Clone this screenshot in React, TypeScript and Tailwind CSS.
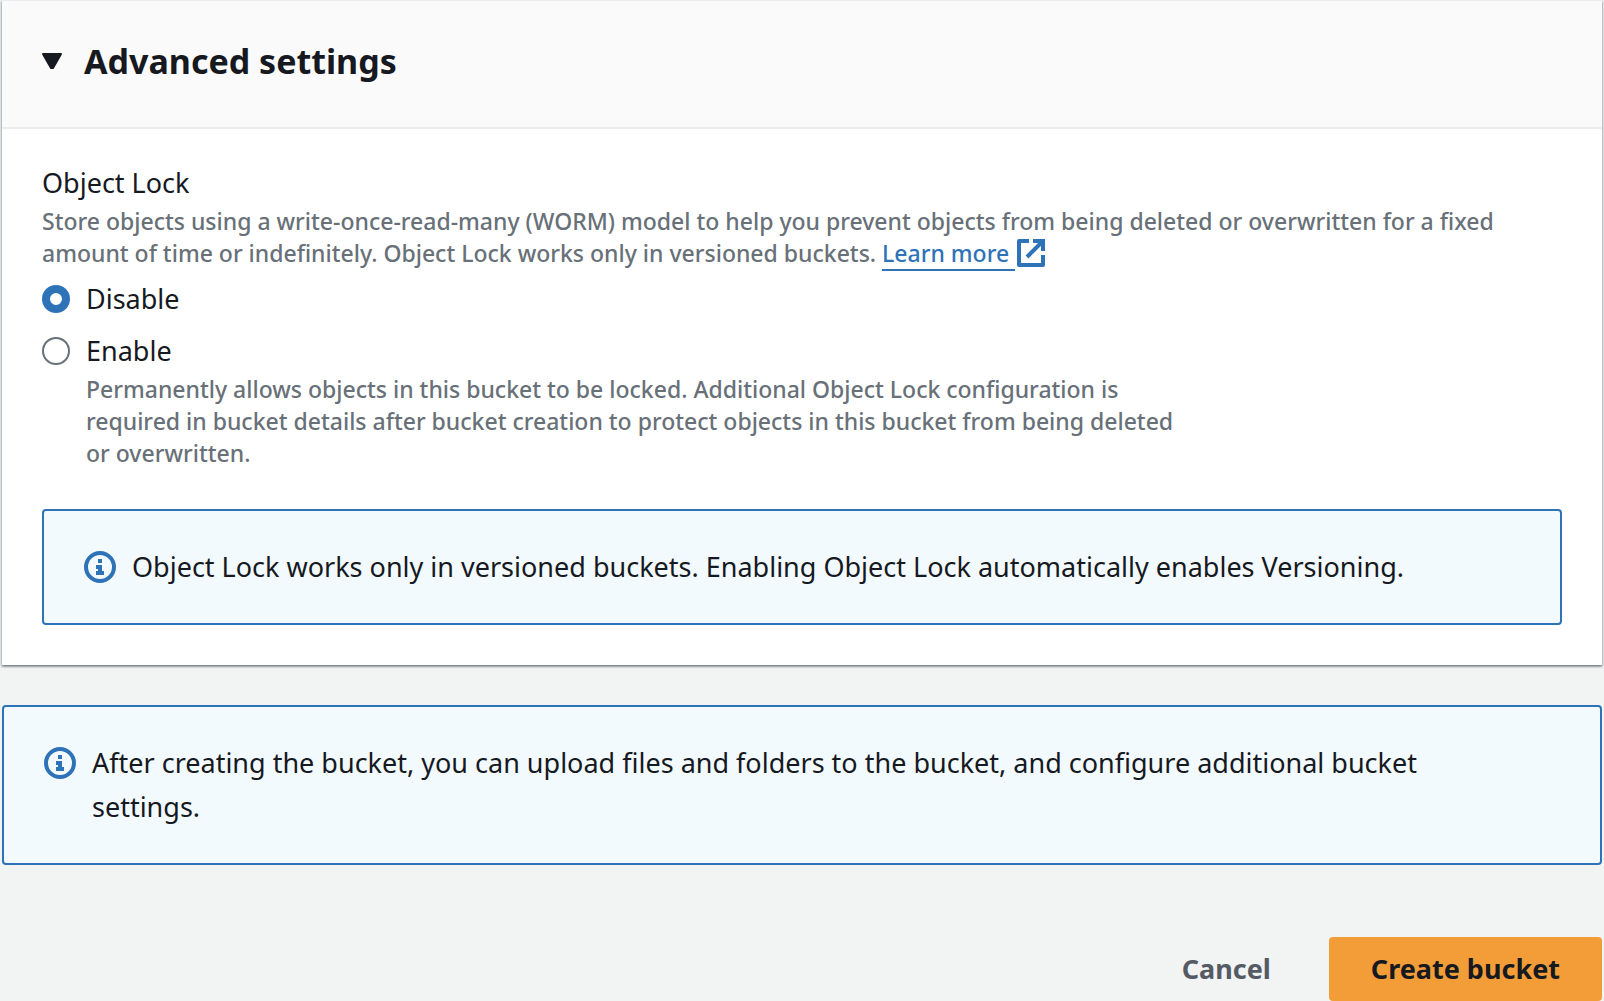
import { ReactNode, useState } from "react"

type LockMode = 'disable' | 'enable'

const InfoIcon = () => (
    <svg viewBox="0 0 32 32" className="h-8 w-8 shrink-0" fill="none" aria-hidden="true">
        <circle cx="16" cy="16" r="14" stroke="#2e73b8" strokeWidth="4" />
        <path d="M14 8h4v4h-4zM12 14h6v6h2v4h-8v-4h2v-2h-2z" fill="#2e73b8" />
    </svg>
)

const ExternalIcon = () => (
    <svg viewBox="0 0 28 28" className="ml-[2px] inline-block h-7 w-7 align-[-5px]" fill="none" stroke="#2e73b8" strokeWidth="4" aria-hidden="true">
        <path d="M12 2H2v24h24V16" strokeLinejoin="round" />
        <path d="M16 2h10v10M25 3L10 18" />
    </svg>
)

const InfoAlert = ({children}: {children: ReactNode}) => (
    <div className="flex items-start gap-4 rounded-[4px] border-2 border-[#2e73b8] bg-[#f2fafd] px-10 py-[34px]" role="status">
        <div className="flex h-11 items-center">
            <InfoIcon />
        </div>
        <p className="max-w-[1400px] text-[27px] leading-[44px]">{children}</p>
    </div>
)

interface LockOptionProps {
    value: LockMode;
    label: string;
    description?: string;
    selected: LockMode;
    onSelect: (value: LockMode) => void;
}

const LockOption = ({value, label, description, selected, onSelect}: LockOptionProps) => (
    <div className="flex gap-4">
        <div className="flex h-11 items-center">
            <input
                type="radio"
                id={`lock-${value}`}
                name="objectLock"
                value={value}
                checked={selected === value}
                onChange={() => onSelect(value)}
                className="h-7 w-7 appearance-none rounded-full border-2 border-[#687078] bg-white checked:border-[8px] checked:border-[#2e73b8]"
            />
        </div>
        <div>
            <label htmlFor={`lock-${value}`} className="block text-[27px] leading-[44px]">{label}</label>
            {description && (
                <p className="max-w-[1100px] text-[23px] leading-8 font-medium text-[#687078]">{description}</p>
            )}
        </div>
    </div>
)

export default function App() {
    const [open, setOpen] = useState(true)
    const [lockMode, setLockMode] = useState<LockMode>('disable')

    return (
        <main className="min-h-screen bg-[#f2f3f3] px-[2px] font-['Noto_Sans',sans-serif] text-[#16191f]">
            <section className="border-t border-[#eaeded] bg-white shadow-[0_2px_2px_0_rgba(0,28,36,0.3),1px_1px_2px_0_rgba(0,28,36,0.2),-1px_1px_2px_0_rgba(0,28,36,0.2)]">
                <h2 className="border-b-2 border-[#eaeded] bg-[#fafafa]">
                    <button
                        type="button"
                        aria-expanded={open}
                        onClick={() => setOpen(!open)}
                        className="flex h-[126px] w-full items-center gap-[22px] px-10 pb-[6px] text-left text-[34px] font-bold"
                    >
                        <svg viewBox="0 0 20 16" className="h-4 w-5" aria-hidden="true">
                            <path d="M1 1h18L11 15H9z" fill="#16191f" stroke="#16191f" strokeWidth="2" strokeLinejoin="round" />
                        </svg>
                        Advanced settings
                    </button>
                </h2>

                {open && (
                    <div className="px-10 pt-8 pb-10">
                        <fieldset>
                            <legend className="text-[27px] leading-[44px]">Object Lock</legend>
                            <p className="text-[23px] leading-8 font-medium text-[#687078]">
                                Store objects using a write-once-read-many (WORM) model to help you prevent objects from being deleted or overwritten for a fixed amount of time or indefinitely. Object Lock works only in versioned buckets.{' '}
                                <a href="#learn-more" className="whitespace-nowrap text-[#2e73b8]">
                                    <span className="border-b-2 border-[#2e73b8] pr-[6px]">Learn more</span>
                                    <ExternalIcon />
                                </a>
                            </p>
                            <div className="mt-2 grid gap-2">
                                <LockOption value="disable" label="Disable" selected={lockMode} onSelect={setLockMode} />
                                <LockOption
                                    value="enable"
                                    label="Enable"
                                    description="Permanently allows objects in this bucket to be locked. Additional Object Lock configuration is required in bucket details after bucket creation to protect objects in this bucket from being deleted or overwritten."
                                    selected={lockMode}
                                    onSelect={setLockMode}
                                />
                            </div>
                        </fieldset>
                        <div className="mt-10">
                            <InfoAlert>Object Lock works only in versioned buckets. Enabling Object Lock automatically enables Versioning.</InfoAlert>
                        </div>
                    </div>
                )}
            </section>

            <div className="mt-10">
                <InfoAlert>After creating the bucket, you can upload files and folders to the bucket, and configure additional bucket settings.</InfoAlert>
            </div>

            <div className="mt-[72px] flex justify-end gap-4">
                <button type="button" className="h-16 px-[42px] text-[27px] font-bold text-[#545b64]">Cancel</button>
                <button type="button" className="h-16 rounded-[4px] bg-[#f29d38] px-[42px] text-[27px] font-bold">Create bucket</button>
            </div>
        </main>
    )
}
